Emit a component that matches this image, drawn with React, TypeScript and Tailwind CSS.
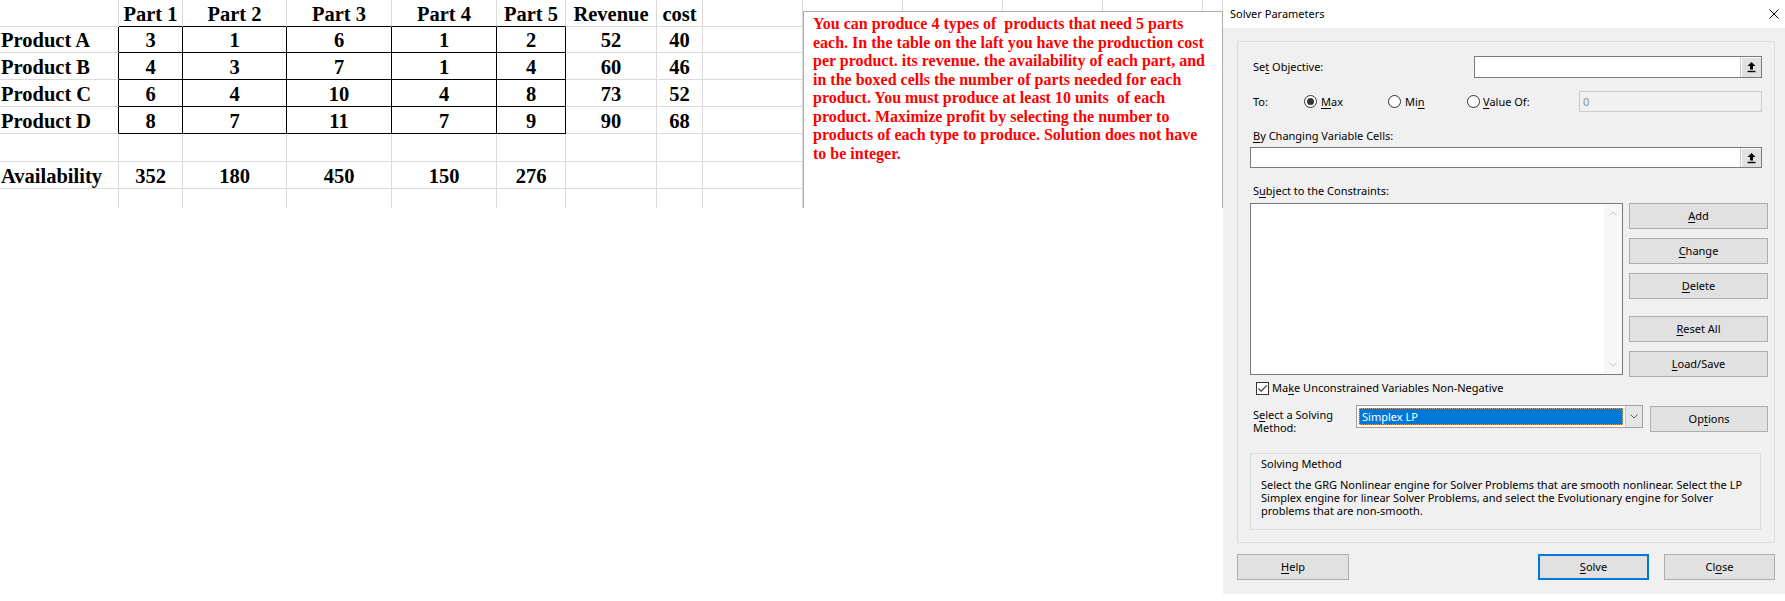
import React from "react";

const COLS =
  "grid-cols-[119px_64px_104px_105px_105px_69px_91px_46px_100px_100px_100px_100px_100px_1fr]";

const DATA: (string | number)[][] = [
  ["", "Part 1", "Part 2", "Part 3", "Part 4", "Part 5", "Revenue", "cost"],
  ["Product A", 3, 1, 6, 1, 2, 52, 40],
  ["Product B", 4, 3, 7, 1, 4, 60, 46],
  ["Product C", 6, 4, 10, 4, 8, 73, 52],
  ["Product D", 8, 7, 11, 7, 9, 90, 68],
  [],
  ["Availability", 352, 180, 450, 150, 276],
  [],
];

const NOTE = [
  "You can produce 4 types of  products that need 5 parts",
  "each. In the table on the laft you have the production cost",
  "per product. its revenue. the availability of each part, and",
  "in the boxed cells the number of parts needed for each",
  "product. You must produce at least 10 units  of each",
  "product. Maximize profit by selecting the number to",
  "products of each type to produce. Solution does not have",
  "to be integer.",
];

function Sheet() {
  const cells: React.ReactNode[] = [];
  DATA.forEach((row, r) => {
    for (let c = 0; c < 14; c++) {
      const v = row[c];
      const blackRight = r >= 1 && r <= 4 && c <= 5;
      const blackBottom = r <= 4 && c >= 1 && c <= 5;
      const last = r === 7;
      cells.push(
        <div
          key={`${r}-${c}`}
          className={
            "flex items-end overflow-visible whitespace-nowrap border-r " +
            (blackRight ? "border-r-black " : "border-r-[#dadada] ") +
            (last ? "" : "border-b ") +
            (blackBottom ? "border-b-black " : "border-b-[#dadada] ") +
            (c === 0 ? "justify-start pl-[1px]" : "justify-center")
          }
        >
          {v !== undefined && v !== "" ? <span>{v}</span> : null}
        </div>
      );
    }
  });
  return (
    <div className="relative h-[208px] w-[1223px] overflow-hidden">
      <div
        className={
          "grid " +
          COLS +
          " grid-rows-[27px_26px_27px_27px_27px_28px_27px_19px] font-['Liberation_Serif','Times_New_Roman',serif] font-bold text-[20.5px] leading-[23px] text-black"
        }
      >
        {cells}
      </div>
      <div className="absolute left-[803px] top-[11px] w-[420px] h-[230px] border border-[#ababab] bg-white pl-[9px] pt-[3px] font-['Liberation_Serif','Times_New_Roman',serif] font-bold text-[16px] leading-[18.5px] text-[#ff0000]">
        {NOTE.map((l, i) => (
          <div key={i} className="whitespace-pre">
            {l}
          </div>
        ))}
      </div>
    </div>
  );
}

function U({ c }: { c: string }) {
  return <span className="underline underline-offset-[2px] decoration-[1px]">{c}</span>;
}

function Btn({ children, className }: { children: React.ReactNode; className: string }) {
  return (
    <div
      className={
        "flex items-center justify-center bg-[#e1e1e1] border border-[#adadad] " + className
      }
    >
      <span>{children}</span>
    </div>
  );
}

function Radio({ checked }: { checked?: boolean }) {
  return (
    <span className="flex h-[13px] w-[13px] items-center justify-center rounded-full border border-[#333333] bg-white">
      {checked ? <span className="h-[7px] w-[7px] rounded-full bg-[#333333]" /> : null}
    </span>
  );
}

function Collapse() {
  return (
    <div className="flex h-full w-[21px] items-center justify-center border-l border-[#c8c8c8] bg-[#e1e1e1] shadow-[inset_1px_1px_0_#ffffff]">
      <svg width="11" height="12" viewBox="0 0 11 12">
        <path d="M5.5 1 L9.5 5 H7 V8.6 H4 V5 H1.5 Z" fill="#000" />
        <rect x="1.5" y="9.8" width="8" height="1.4" fill="#000" />
      </svg>
    </div>
  );
}

function Dialog() {
  return (
    <div className="absolute left-[1223px] top-0 flex h-[594px] w-[562px] flex-col bg-[#f0f0f0] font-['Noto_Sans',sans-serif] text-[11px] leading-[14px] text-black">
      <div className="flex h-[28px] items-center justify-between bg-white pl-[7px] pr-[6px]">
        <span>Solver Parameters</span>
        <svg width="10" height="10" viewBox="0 0 10 10">
          <path d="M0.5 0.5 L9.5 9.5 M9.5 0.5 L0.5 9.5" stroke="#000" strokeWidth="1" />
        </svg>
      </div>

      <div className="ml-[14px] mt-[13px] flex h-[502px] w-[538px] flex-col border border-[#dcdcdc] pl-[12px] pr-[5px]">
        <div className="mt-[14px] flex h-[22px] items-center">
          <span className="ml-[3px]">
            Se<U c="t" /> Objective:
          </span>
          <div className="ml-auto mr-[7px] flex h-[22px] w-[288px] border border-[#7a7a7a] bg-white">
            <div className="flex-1" />
            <Collapse />
          </div>
        </div>

        <div className="mt-[13px] flex h-[21px] items-center">
          <span className="ml-[3px] w-[51px]">To:</span>
          <div className="flex w-[84px] items-center">
            <Radio checked />
            <span className="ml-[4px]">
              <U c="M" />
              ax
            </span>
          </div>
          <div className="flex w-[79px] items-center">
            <Radio />
            <span className="ml-[4px]">
              Mi<U c="n" />
            </span>
          </div>
          <div className="flex items-center">
            <Radio />
            <span className="ml-[3px]">
              <U c="V" />
              alue Of:
            </span>
          </div>
          <div className="ml-auto mr-[7px] flex h-[21px] w-[183px] items-center border border-[#cccccc] bg-[#f0f0f0] pl-[3px] text-[#8d8d8d]">
            0
          </div>
        </div>

        <div className="ml-[3px] mt-[16px] flex h-[16px] items-center">
          <span>
            <U c="B" />y Changing Variable Cells:
          </span>
        </div>
        <div className="mr-[7px] mt-[3px] flex h-[21px] border border-[#7a7a7a] bg-white">
          <div className="flex-1" />
          <Collapse />
        </div>

        <div className="ml-[3px] mt-[15px] flex h-[16px] items-center">
          <span>
            S<U c="u" />bject to the Constraints:
          </span>
        </div>

        <div className="mt-[4px] flex h-[175px]">
          <div className="flex h-[172px] w-[373px] border border-[#7a7a7a] bg-white">
            <div className="flex-1" />
            <div className="flex w-[18px] flex-col items-center justify-between bg-[#f7f7f7] py-[7px]">
              <svg width="8" height="5" viewBox="0 0 8 5">
                <path d="M0.5 4.5 L4 1 L7.5 4.5" stroke="#c2c2c2" fill="none" strokeWidth="1" />
              </svg>
              <svg width="8" height="5" viewBox="0 0 8 5">
                <path d="M0.5 0.5 L4 4 L7.5 0.5" stroke="#c2c2c2" fill="none" strokeWidth="1" />
              </svg>
            </div>
          </div>
          <div className="ml-[6px] flex w-[139px] flex-col">
            <Btn className="h-[26px]">
              <U c="A" />dd
            </Btn>
            <Btn className="mt-[9px] h-[26px]">
              <U c="C" />hange
            </Btn>
            <Btn className="mt-[9px] h-[26px]">
              <U c="D" />elete
            </Btn>
            <Btn className="mt-[17px] h-[26px]">
              <U c="R" />eset All
            </Btn>
            <Btn className="mt-[9px] h-[26px]">
              <U c="L" />oad/Save
            </Btn>
          </div>
        </div>

        <div className="mt-[2px] flex h-[16px] items-center">
          <span className="ml-[6px] flex h-[13px] w-[13px] items-center justify-center border border-[#333333] bg-white">
            <svg width="11" height="11" viewBox="0 0 11 11">
              <path d="M1.5 5.5 L4.2 8.2 L9.8 2.3" stroke="#333" fill="none" strokeWidth="1.1" />
            </svg>
          </span>
          <span className="ml-[3px]">
            Ma<U c="k" />e Unconstrained Variables Non-Negative
          </span>
        </div>

        <div className="mt-[9px] flex h-[27px] items-start">
          <div className="ml-[3px] mt-[3px] w-[103px] leading-[13px]">
            S<U c="e" />lect a Solving
            <br />
            Method:
          </div>
          <div className="flex h-[23px] w-[287px] border border-[#a0a0a0] bg-white">
            <div className="m-[2px] flex flex-1 items-center border border-dotted border-[#ff9a3c] bg-[#0078d7] pl-[2px] text-white">
              Simplex LP
            </div>
            <div className="flex w-[17px] items-center justify-center border-l border-[#c8c8c8] bg-[#e5e5e5]">
              <svg width="8" height="5" viewBox="0 0 8 5">
                <path d="M0.5 0.5 L4 4 L7.5 0.5" stroke="#606060" fill="none" strokeWidth="1" />
              </svg>
            </div>
          </div>
          <Btn className="ml-[7px] mt-[1px] h-[26px] w-[118px]">
            Op<U c="t" />ions
          </Btn>
        </div>

        <div className="mt-[21px] h-[77px] w-[511px] border border-[#dcdcdc] pl-[10px] pt-[2px]">
          <div className="leading-[16px]">Solving Method</div>
          <div className="mt-[6px] leading-[13px]">
            Select the GRG Nonlinear engine for Solver Problems that are smooth nonlinear. Select the LP
            <br />
            Simplex engine for linear Solver Problems, and select the Evolutionary engine for Solver
            <br />
            problems that are non-smooth.
          </div>
        </div>
      </div>

      <div className="ml-[14px] mt-[11px] flex h-[26px] w-[538px]">
        <Btn className="h-[26px] w-[112px]">
          <U c="H" />elp
        </Btn>
        <div className="ml-auto flex h-[26px] w-[111px] items-center justify-center border-2 border-[#0078d7] bg-[#e1e1e1]">
          <span>
            <U c="S" />olve
          </span>
        </div>
        <Btn className="ml-[15px] h-[26px] w-[111px]">
          Cl<U c="o" />se
        </Btn>
      </div>
    </div>
  );
}

export default function App() {
  return (
    <div className="relative h-[601px] w-[1785px] overflow-hidden bg-white">
      <Sheet />
      <Dialog />
    </div>
  );
}
